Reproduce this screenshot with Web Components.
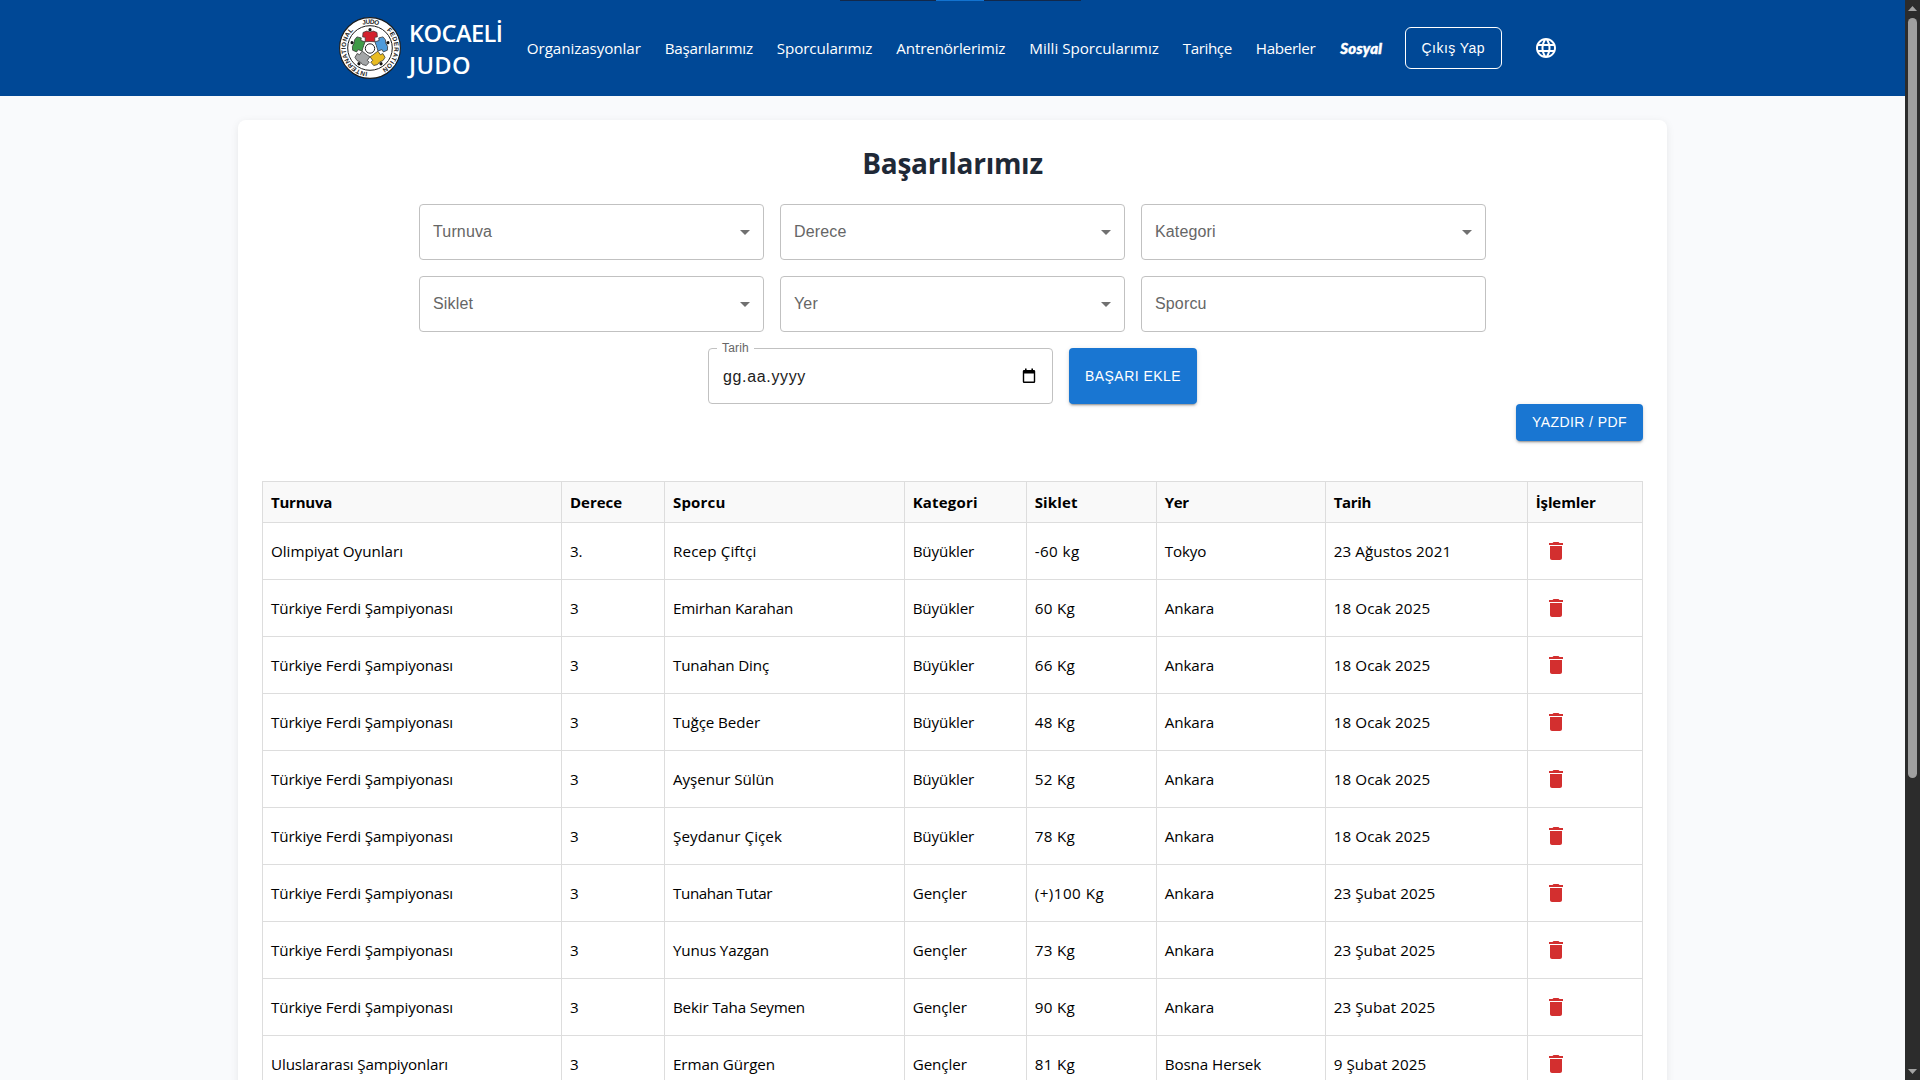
<!DOCTYPE html>
<html lang="tr">
<head>
<meta charset="utf-8">
<title>Kocaeli Judo</title>
<style>
html,body{margin:0;height:100%;overflow:hidden}
body{background:#f9fafc;font-family:"Open Sans","Noto Sans",sans-serif;color:#000}
</style>
</head>
<body>
<judo-app></judo-app>
<script>
const make = (name, html, after) => {
  const t = document.createElement('template');
  t.innerHTML = html;
  customElements.define(name, class extends HTMLElement {
    connectedCallback() {
      if (this.shadowRoot) return;
      this.attachShadow({ mode: 'open' }).appendChild(t.content.cloneNode(true));
      if (after) after.call(this, this.shadowRoot);
    }
  });
};

/* text that spreads its letters so that the line takes the given width */
make('fit-text', `<style>:host{display:inline-block;white-space:pre}span{display:inline-block}</style><span><slot></slot></span>`, function (root) {
  const s = root.querySelector('span');
  const w = +this.getAttribute('w');
  const n = [...this.textContent].length;
  s.style.letterSpacing = ((w - s.getBoundingClientRect().width) / n).toFixed(3) + 'px';
});

make('judo-logo', `<style>:host{display:block;width:62px;height:62px;flex:none}svg{display:block}text{font:700 6.4px "Liberation Sans",sans-serif;fill:#222}</style>
<svg width="62" height="62" viewBox="0 0 62 62">
<defs>
<path id="ring" d="M31 55.2A24.2 24.2 0 1 1 31.01 55.2"/>
<g id="gi"><path d="M-3.4-17.4L-7-16-7.4-11.600-4.8-11.200V-6.800H4.8V-11.200L7.400-11.600 7-16 3.400-17.400 0-16.600Z" stroke="#333" stroke-width=".7"/><circle cy="-18.800" r="1.600" fill="#111"/></g>
</defs>
<circle cx="31" cy="31" r="30.4" fill="#fff" stroke="#1c1c1c" stroke-width="1.1"/>
<circle cx="31" cy="31" r="22.3" fill="#fff" stroke="#1c1c1c" stroke-width="1"/>
<g transform="translate(31 31.5)">
<use href="#gi" fill="#d3212d"/>
<use href="#gi" fill="#4f9bdb" transform="rotate(72)"/>
<use href="#gi" fill="#e8bb22" transform="rotate(144)"/>
<use href="#gi" fill="#a4a6a8" transform="rotate(216)"/>
<use href="#gi" fill="#3f9a48" transform="rotate(288)"/>
<circle r="6.4" fill="#fff"/><circle r="4.7" fill="#fff" stroke="#222" stroke-width="1"/>
</g>
<text><textPath href="#ring" startOffset="2.5" textLength="55">INTERNATIONAL</textPath></text>
<text><textPath href="#ring" startOffset="68.5" textLength="16">JUDO</textPath></text>
<text><textPath href="#ring" startOffset="94" textLength="45">FEDERATION</textPath></text>
</svg>`);

make('nav-link', `<style>:host{display:block;font-size:15.2px;line-height:24px;color:#fff}</style><slot></slot>`);

make('outline-button', `<style>:host{display:flex;box-sizing:border-box;width:97px;height:42px;border:1px solid #fff;border-radius:6px;align-items:center;justify-content:center;color:#fff;font:14px/24px "Liberation Sans",Arial,sans-serif}</style><slot></slot>`);

make('globe-icon', `<style>:host{display:block;width:24px;height:24px}svg{display:block}</style>
<svg width="24" height="24" viewBox="0 0 24 24" fill="#fff"><path d="M11.99 2C6.47 2 2 6.48 2 12s4.47 10 9.99 10C17.52 22 22 17.52 22 12S17.52 2 11.99 2zm6.93 6h-2.95c-.32-1.25-.78-2.45-1.38-3.56 1.84.63 3.37 1.91 4.33 3.56zM12 4.04c.83 1.2 1.48 2.53 1.91 3.96h-3.82c.43-1.43 1.08-2.76 1.91-3.96zM4.26 14C4.1 13.36 4 12.69 4 12s.1-1.36.26-2h3.38c-.08.66-.14 1.32-.14 2s.06 1.34.14 2H4.26zm.82 2h2.95c.32 1.25.78 2.45 1.38 3.56-1.84-.63-3.37-1.9-4.33-3.56zm2.95-8H5.08c.96-1.66 2.49-2.93 4.33-3.56C8.81 5.55 8.35 6.75 8.03 8zM12 19.96c-.83-1.2-1.48-2.53-1.91-3.96h3.82c-.43 1.43-1.08 2.76-1.91 3.96zM14.34 14H9.66c-.09-.66-.16-1.32-.16-2s.07-1.35.16-2h4.68c.09.65.16 1.32.16 2s-.07 1.34-.16 2zm.25 5.56c.6-1.11 1.06-2.31 1.38-3.56h2.95c-.96 1.65-2.49 2.93-4.33 3.56zM16.36 14c.08-.66.14-1.32.14-2s-.06-1.34-.14-2h3.38c.16.64.26 1.31.26 2s-.1 1.36-.26 2h-3.38z"/></svg>`);

make('nav-bar', `<style>
:host{display:flex;box-sizing:border-box;height:96px;background:#004896;align-items:center;padding-left:339px;position:relative}
.brand{width:109px;margin-left:8px;margin-right:8.8px;font-weight:600;font-size:23.6px;line-height:32px;color:#fff;padding-top:1px;display:flex;flex-direction:column}
nav{display:flex;align-items:center;gap:24px;width:856.200px}
nav-link{flex:none}
.social{font:italic 900 15px/24px Lato,sans-serif;-webkit-text-stroke:.5px #fff;margin-left:1px}
outline-button{margin-left:21.800px}
globe-icon{margin-left:32px}
.tabs{position:absolute;left:840px;top:0;width:241px;height:1px;background:linear-gradient(90deg,#12284a 96px,#1273d0 96px 144px,#12284a 144px)}
</style>
<div class="tabs"></div>
<judo-logo></judo-logo>
<div class="brand"><fit-text w="93.5">KOCAELİ</fit-text><fit-text w="62">JUDO</fit-text></div>
<nav>
<nav-link><fit-text w="114">Organizasyonlar</fit-text></nav-link>
<nav-link><fit-text w="88">Başarılarımız</fit-text></nav-link>
<nav-link><fit-text w="95.5">Sporcularımız</fit-text></nav-link>
<nav-link><fit-text w="109">Antrenörlerimiz</fit-text></nav-link>
<nav-link><fit-text w="129.500">Milli Sporcularımız</fit-text></nav-link>
<nav-link><fit-text w="49">Tarihçe</fit-text></nav-link>
<nav-link><fit-text w="59.500">Haberler</fit-text></nav-link>
<nav-link class="social"><fit-text w="42">Sosyal</fit-text></nav-link>
</nav>
<outline-button><fit-text w="63.500">Çıkış Yap</fit-text></outline-button>
<globe-icon></globe-icon>`);

make('filter-field', `<style>
:host{display:flex;box-sizing:border-box;width:345px;height:56px;border:1px solid #c1c1c1;border-radius:4px;padding:0 6px 0 13px;align-items:center;justify-content:space-between;color:#666;font:16px/23px "Liberation Sans",Arial,sans-serif;letter-spacing:.15px}
:host([plain]) svg{display:none}svg{display:block}span{padding-bottom:2px}
</style><span><slot></slot></span><svg width="24" height="24" viewBox="0 0 24 24" fill="#707070"><path d="M7 10l5 5 5-5z"/></svg>`);

make('date-field', `<style>
:host{display:flex;box-sizing:border-box;width:345px;height:56px;border:1px solid #c1c1c1;border-radius:4px;padding:0 16px 0 14px;align-items:center;justify-content:space-between;position:relative;color:#212121;font:16px/23px "Liberation Sans",Arial,sans-serif}
.label{position:absolute;left:8px;top:-9px;padding:0 5px;width:27px;background:#fff;font-size:12px;line-height:17px;color:#666}
svg{display:block}
</style><span class="label"><fit-text w="27">Tarih</fit-text></span><slot></slot>
<svg width="14" height="16" viewBox="0 0 14 16" fill="#000"><path fill-rule="evenodd" d="M3 0.6h1.6V2h4.8V.6H11V2h.9A1.3 1.3 0 0 1 13.2 3.3v10.4A1.3 1.3 0 0 1 11.9 15H2.1A1.3 1.3 0 0 1 .8 13.700V3.300A1.300 1.300 0 0 1 2.100 2H3zM2.200 5.600v8h9.600v-8z"/></svg>`);

make('solid-button', `<style>:host{display:flex;box-sizing:border-box;align-items:center;justify-content:center;background:#1976d2;border-radius:4px;color:#fff;font:14px/24px "Liberation Sans",Arial,sans-serif;box-shadow:0 3px 1px -2px rgba(0,0,0,.2),0 2px 2px rgba(0,0,0,.14),0 1px 5px rgba(0,0,0,.12)}</style><slot></slot>`);

make('trash-button', `<style>:host{display:block;padding:0 8px}svg{display:block}</style><svg width="24" height="24" viewBox="0 0 24 24" fill="#d32f2f"><path d="M6 19c0 1.1.9 2 2 2h8c1.1 0 2-.9 2-2V7H6v12zM19 4h-3.5l-1-1h-5l-1 1H5v2h14V4z"/></svg>`);

const W = {'Olimpiyat Oyunları':132,'Türkiye Ferdi Şampiyonası':182,'Uluslararası Şampiyonları':177,'Recep Çiftçi':83.5,'Emirhan Karahan':120,'Tunahan Dinç':96,'Tuğçe Beder':87,'Ayşenur Sülün':101,'Şeydanur Çiçek':109,'Tunahan Tutar':99,'Yunus Yazgan':96,'Bekir Taha Seymen':132,'Erman Gürgen':102,'Büyükler':61.5,'Gençler':54.2,'-60 kg':45,'60 Kg':40.500,'66 Kg':40.500,'48 Kg':40.500,'52 Kg':40.500,'78 Kg':40.500,'73 Kg':40.500,'90 Kg':40.500,'81 Kg':40.500,'(+)100 Kg':69.500,'Ankara':49.5,'Tokyo':41.5,'Bosna Hersek':96.5,'23 Ağustos 2021':117.5,'18 Ocak 2025':96.5,'23 Şubat 2025':101.5,'9 Şubat 2025':92.5,'3':8.600,'3.':12.200,
'Turnuva':61,'Derece':52,'Sporcu':52.5,'Kategori':65,'Siklet':43,'Yer':24,'Tarih':37.5,'İşlemler':60};
const F='Türkiye Ferdi Şampiyonası', B='Büyükler', G='Gençler', A='Ankara', O='18 Ocak 2025', S='23 Şubat 2025';
const rows = [
 ['Olimpiyat Oyunları','3.','Recep Çiftçi',B,'-60 kg','Tokyo','23 Ağustos 2021'],
 [F,'3','Emirhan Karahan',B,'60 Kg',A,O],[F,'3','Tunahan Dinç',B,'66 Kg',A,O],[F,'3','Tuğçe Beder',B,'48 Kg',A,O],
 [F,'3','Ayşenur Sülün',B,'52 Kg',A,O],[F,'3','Şeydanur Çiçek',B,'78 Kg',A,O],[F,'3','Tunahan Tutar',G,'(+)100 Kg',A,S],
 [F,'3','Yunus Yazgan',G,'73 Kg',A,S],[F,'3','Bekir Taha Seymen',G,'90 Kg',A,S],['Uluslararası Şampiyonları','3','Erman Gürgen',G,'81 Kg','Bosna Hersek','9 Şubat 2025']];
const cell = (t, i) => `<div${i > 2 ? ' class="r"' : ''}><fit-text w="${W[t]}">${t}</fit-text></div>`;

make('results-table', `<style>
:host{display:grid;grid-template-columns:299px 103px 240px 122px 130px 169px 202px 115px;grid-template-rows:41px;grid-auto-rows:57px;border:solid #ddd;border-width:1px 0 0 1px;width:1380px;font-size:15.2px;line-height:24px}
div{box-sizing:border-box;border:solid #ddd;border-width:0 1px 1px 0;padding-left:8px;display:flex;align-items:center}
.r{padding-left:7.700px}
.h{display:contents;font-weight:700;font-size:15px}.h div{background:#f9f9f9}
</style><section class="h">${['Turnuva','Derece','Sporcu','Kategori','Siklet','Yer','Tarih','İşlemler'].map(cell).join('')}</section>
${rows.map(r => r.map(cell).join('') + '<div><trash-button></trash-button></div>').join('')}`);

make('content-card', `<style>
:host{display:flex;flex-direction:column;box-sizing:border-box;width:1429px;height:1100px;margin:24px auto 0;padding:23px 24px 0;background:#fff;border-radius:8px;box-shadow:0 2px 8px rgba(0,0,0,.08)}
h1{margin:0;text-align:center;font-weight:700;font-size:28px;line-height:40px;color:#1f2937}
.filters{display:flex;flex-wrap:wrap;gap:16px;width:1080px;justify-content:center;align-self:center;margin-top:21px}
.add{width:128px;height:56px}.print{width:127px;height:37px;align-self:flex-end;padding-bottom:1px}
results-table{margin-top:40px}
</style>
<h1><fit-text w="180.5">Başarılarımız</fit-text></h1>
<div class="filters">
<filter-field>Turnuva</filter-field><filter-field>Derece</filter-field><filter-field>Kategori</filter-field>
<filter-field>Siklet</filter-field><filter-field>Yer</filter-field><filter-field plain>Sporcu</filter-field>
<date-field><fit-text w="83">gg.aa.yyyy</fit-text></date-field><solid-button class="add"><fit-text w="96">BAŞARI EKLE</fit-text></solid-button>
</div>
<solid-button class="print"><fit-text w="95">YAZDIR / PDF</fit-text></solid-button>
<results-table></results-table>`);

make('scroll-rail', `<style>
:host{display:flex;flex-direction:column;box-sizing:border-box;width:15px;height:1080px;background:#2c2c2c;padding:6px 3px;align-items:center;justify-content:space-between}
.thumb{width:9px;height:760px;border-radius:5px;background:#9f9f9f;margin-top:7px}
svg{display:block}.gap{flex:1}
</style>
<svg width="9" height="5"><path d="M0 5L4.500 0 9 5z" fill="#a3a3a3"/></svg><div class="thumb"></div><div class="gap"></div>
<svg width="9" height="5"><path d="M0 0L4.500 5 9 0z" fill="#a3a3a3"/></svg>`);

make('judo-app', `<style>:host{display:flex;width:1920px;height:1080px;overflow:hidden}main{width:1905px;height:1080px;overflow:hidden}</style>
<main><nav-bar></nav-bar><content-card></content-card></main><scroll-rail></scroll-rail>`);
</script>
</body>
</html>
